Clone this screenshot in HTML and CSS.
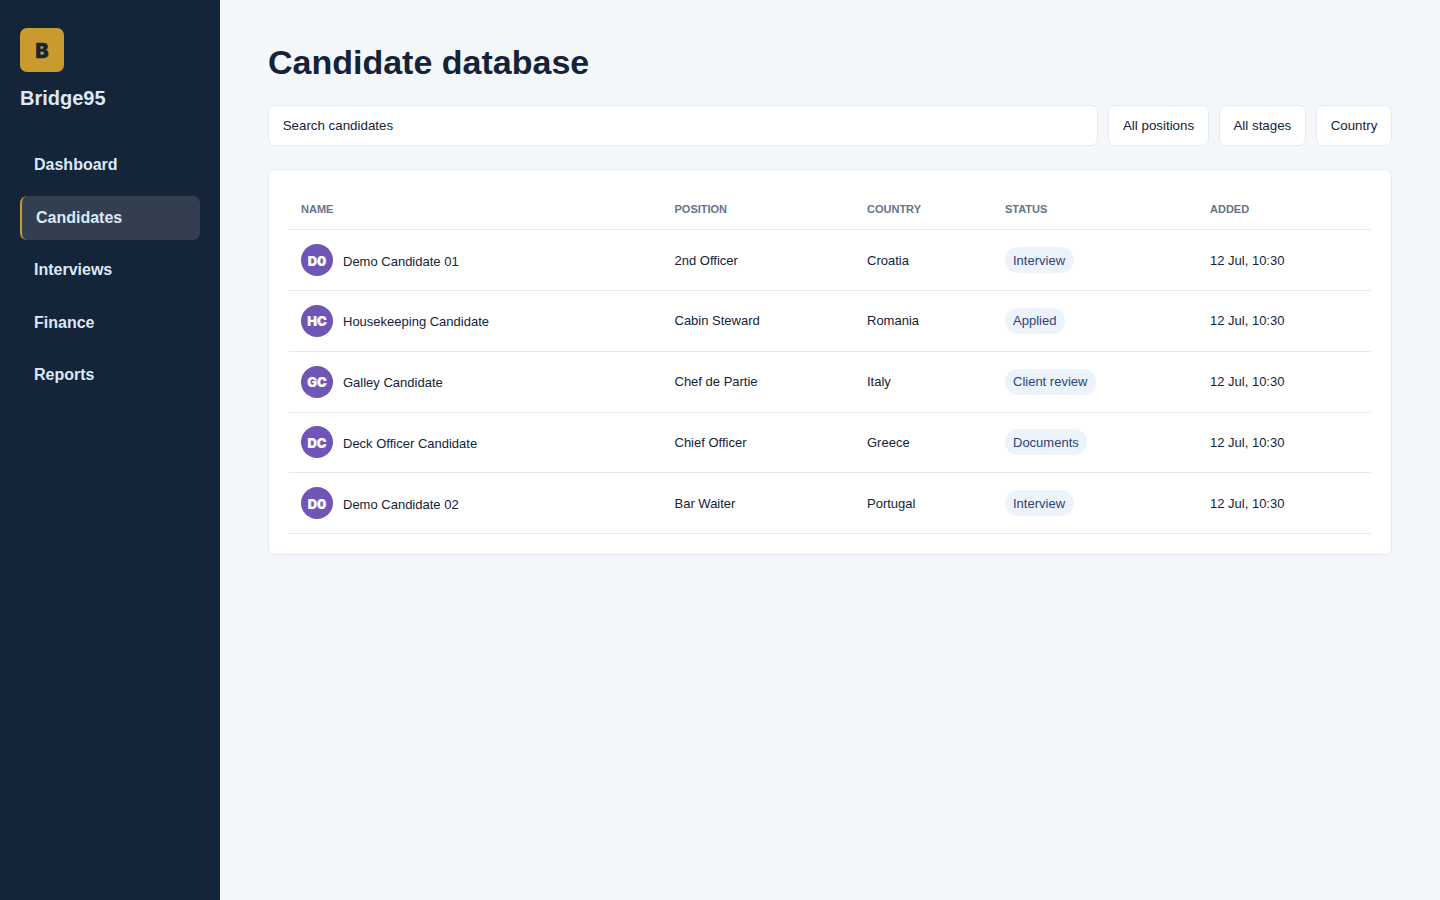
FILE: index.html
```html
<!DOCTYPE html>
<html lang="en">
<head>
    <meta charset="utf-8">
    <title>Candidate database</title>
    <meta name="viewport" content="width=device-width" />
    <link rel="stylesheet" href="styles.css">
</head>
<body>
    <aside class="sidebar">
        <div class="logo">B</div>
        <div class="brand">Bridge95</div>
        <nav>
            <a>Dashboard</a>
            <a class="active">Candidates</a>
            <a>Interviews</a>
            <a>Finance</a>
            <a>Reports</a>
        </nav>
    </aside>
    <main>
        <h1>Candidate database</h1>
        <div class="filters">
            <div class="search">Search candidates</div>
            <div>All positions</div>
            <div>All stages</div>
            <div>Country</div>
        </div>
        <section class="card">
            <table>
                <thead>
                    <tr>
                        <th class="name">Name</th>
                        <th class="position">Position</th>
                        <th class="country">Country</th>
                        <th class="status">Status</th>
                        <th>Added</th>
                    </tr>
                </thead>
                <tbody>
                    <tr>
                        <td><div class="person"><span class="avatar">D0</span><span class="label">Demo Candidate 01</span></div></td>
                        <td>2nd Officer</td>
                        <td>Croatia</td>
                        <td><span class="pill">Interview</span></td>
                        <td>12 Jul, 10:30</td>
                    </tr>
                    <tr>
                        <td><div class="person"><span class="avatar">HC</span><span class="label">Housekeeping Candidate</span></div></td>
                        <td>Cabin Steward</td>
                        <td>Romania</td>
                        <td><span class="pill">Applied</span></td>
                        <td>12 Jul, 10:30</td>
                    </tr>
                    <tr>
                        <td><div class="person"><span class="avatar">GC</span><span class="label">Galley Candidate</span></div></td>
                        <td>Chef de Partie</td>
                        <td>Italy</td>
                        <td><span class="pill">Client review</span></td>
                        <td>12 Jul, 10:30</td>
                    </tr>
                    <tr>
                        <td><div class="person"><span class="avatar">DC</span><span class="label">Deck Officer Candidate</span></div></td>
                        <td>Chief Officer</td>
                        <td>Greece</td>
                        <td><span class="pill">Documents</span></td>
                        <td>12 Jul, 10:30</td>
                    </tr>
                    <tr>
                        <td><div class="person"><span class="avatar">D0</span><span class="label">Demo Candidate 02</span></div></td>
                        <td>Bar Waiter</td>
                        <td>Portugal</td>
                        <td><span class="pill">Interview</span></td>
                        <td>12 Jul, 10:30</td>
                    </tr>
                </tbody>
            </table>
        </section>
    </main>
</body>
</html>
```

FILE: styles.css
```css
* {
    box-sizing: border-box;
}
body {
    margin: 0;
    display: flex;
    min-height: 100vh;
    background: #f3f7fa;
    color: #142338;
    font-family: Arial, "Liberation Sans", sans-serif;
    font-size: 13px;
}

.sidebar {
    width: 220px;
    flex: none;
    padding: 28px 20px;
    background: #142439;
    color: #dce8f7;
}
.logo {
    display: grid;
    place-items: center;
    width: 44px;
    height: 44px;
    padding-top: 2px;
    border-radius: 7px;
    background: #c99b2e;
    color: #142338;
    font: 900 20px Inter, sans-serif;
    -webkit-text-stroke: 0.3px;
}
.brand {
    margin-top: 15px;
    font-size: 20px;
    font-weight: bold;
    line-height: 23px;
}
nav {
    display: flex;
    flex-direction: column;
    gap: 8px;
    margin-top: 33.4px;
}
nav a {
    padding: 13px 14px;
    border-radius: 7px;
    font-size: 16px;
    font-weight: bold;
    line-height: 18.4px;
}
nav a.active {
    border-left: 2px solid #c99b2e;
    background: #333f50;
}

main {
    flex: 1;
    padding: 42px 48px;
}
h1 {
    margin: 0 0 23px;
    font-size: 34px;
    line-height: 40px;
}
.filters {
    display: flex;
    gap: 10px;
    margin-bottom: 22.4px;
}
.filters div {
    padding: 12px 13.7px 12.2px;
    border: 1px solid #e3eaf1;
    border-radius: 7px;
    background: #fff;
    font-size: 13.3333px;
    line-height: 15px;
}
.filters .search {
    flex: 1;
}

.card {
    padding: 20px;
    border: 1px solid #e3eaf1;
    border-radius: 7px;
    background: #fff;
}
table {
    width: 100%;
    table-layout: fixed;
    border-spacing: 0;
}
th, td {
    padding: 0 12px;
    border-bottom: 1px solid #e6eaee;
    text-align: left;
}
th {
    height: 40.6px;
    padding-bottom: 1px;
    color: #64748b;
    font-size: 11px;
    line-height: 12px;
    text-transform: uppercase;
}
td {
    height: 60.8px;
}
.name {
    width: 373.5px;
}
.position {
    width: 192.5px;
}
.country {
    width: 138px;
}
.status {
    width: 205px;
}
.person {
    display: flex;
    align-items: center;
    gap: 10px;
}
.person .label {
    padding-top: 2px;
}
.avatar {
    display: grid;
    place-items: center;
    width: 32px;
    height: 32px;
    padding-top: 1px;
    border-radius: 50%;
    background: #6f55b5;
    color: #fff;
    font: 900 13px Inter, sans-serif;
    -webkit-text-stroke: 0.2px;
}
.pill {
    display: inline-block;
    padding: 5.5px 8.5px 4.5px 8px;
    border-radius: 99px;
    background: #edf3fb;
    color: #2c4379;
    line-height: 16px;
}
```
